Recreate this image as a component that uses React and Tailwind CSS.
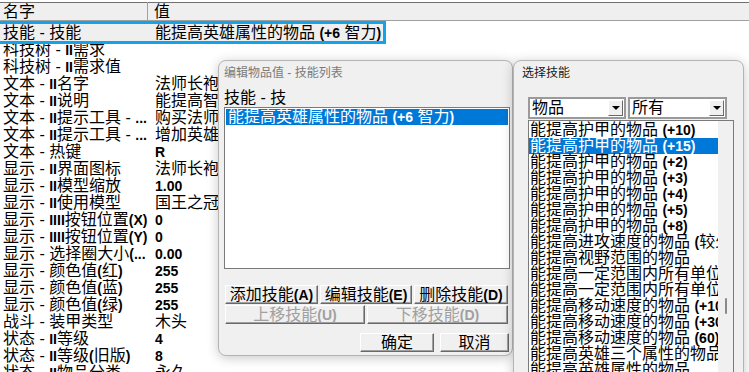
import React from "react";

const FONT = "font-['Liberation_Sans','Noto_Sans_CJK_SC',sans-serif]";

// Latin runs render bold and a bit smaller, like the old bitmap font does
function Mixed({ text }) {
  const parts = text.split(/([A-Za-z0-9()+.]+)/);
  return parts.map((p, i) =>
    /[A-Za-z0-9()+.]/.test(p) ? (
      <b key={i} className="text-[14px] font-bold">{p}</b>
    ) : (
      <span key={i}>{p}</span>
    )
  );
}

const rows = [
  ["科技树 - II需求", ""],
  ["科技树 - II需求值", ""],
  ["文本 - II名字", "法师长袍"],
  ["文本 - II说明", "能提高智力的物品"],
  ["文本 - II提示工具 - ...", "购买法师长袍"],
  ["文本 - II提示工具 - ...", "增加英雄的智力"],
  ["文本 - 热键", "R"],
  ["显示 - II界面图标", "法师长袍"],
  ["显示 - II模型缩放", "1.00"],
  ["显示 - II使用模型", "国王之冠"],
  ["显示 - IIII按钮位置(X)", "0"],
  ["显示 - IIII按钮位置(Y)", "0"],
  ["显示 - 选择圈大小(...", "0.00"],
  ["显示 - 颜色值(红)", "255"],
  ["显示 - 颜色值(蓝)", "255"],
  ["显示 - 颜色值(绿)", "255"],
  ["战斗 - 装甲类型", "木头"],
  ["状态 - II等级", "4"],
  ["状态 - II等级(旧版)", "8"],
  ["状态 - II物品分类", "永久"],
];

const skills = [
  "能提高护甲的物品 (+10)",
  "能提高护甲的物品 (+15)",
  "能提高护甲的物品 (+2)",
  "能提高护甲的物品 (+3)",
  "能提高护甲的物品 (+4)",
  "能提高护甲的物品 (+5)",
  "能提高护甲的物品 (+8)",
  "能提高进攻速度的物品 (较少)",
  "能提高视野范围的物品",
  "能提高一定范围内所有单位的护甲",
  "能提高一定范围内所有单位的攻击",
  "能提高移动速度的物品 (+10)",
  "能提高移动速度的物品 (+30)",
  "能提高移动速度的物品 (60)",
  "能提高英雄三个属性的物品",
  "能提高英雄属性的物品",
];

function Btn({ children, w, disabled }) {
  return (
    <button
      className={`${w} h-[19px] flex items-center justify-center bg-[#f0f0f0] border border-t-white border-l-white border-b-[#696969] border-r-[#696969] shadow-[inset_-1px_-1px_0_#a0a0a0] text-[16px] leading-[16px] ${
        disabled ? "text-[#a0a0a0]" : "text-black"
      }`}
    >
      <Mixed text={children} />
    </button>
  );
}

function Combo({ w, label }) {
  return (
    <div className={`${w} h-[22px] flex items-center bg-white border-2 border-[#9a9a9a] pl-[2px]`}>
      <span className="flex-1 text-[16px] leading-[16px]">{label}</span>
      <span className="w-[15px] h-[16px] mr-[1px] flex items-center justify-center bg-[#f0f0f0] border border-t-white border-l-white border-b-[#696969] border-r-[#696969]">
        <span className="w-0 h-0 border-l-[4px] border-r-[4px] border-t-[4px] border-l-transparent border-r-transparent border-t-black" />
      </span>
    </div>
  );
}

export default function App() {
  return (
    <div className={`relative w-[749px] h-[372px] overflow-hidden bg-white text-black ${FONT}`}>
      {/* property grid */}
      <div className="flex flex-col">
        <div className="h-[21px] flex bg-[#efefef] border-t-2 border-t-white shadow-[inset_0_1px_0_#707070] border-b border-b-[#a0a0a0] text-[16px] leading-[17px]">
          <div className="w-[148px] pl-[3px] pt-[1px] border-r border-[#a0a0a0]">名字</div>
          <div className="pl-[6px] pt-[1px]">值</div>
        </div>
        <div className="mt-[3px] h-[17px] w-[383px] relative z-10 flex bg-[#efefef] outline-3 outline-[#12a3ea] text-[16px] leading-[17px] whitespace-nowrap">
          <div className="w-[155px] pl-[3px]">技能 - 技能</div>
          <div>
            <Mixed text="能提高英雄属性的物品 (+6 智力)" />
          </div>
        </div>
        {rows.map(([k, v], i) => (
          <div key={i} className="h-[17px] flex text-[16px] leading-[17px] whitespace-nowrap">
            <div className="w-[155px] pl-[3px] overflow-hidden">
              <Mixed text={k} />
            </div>
            <div>
              <Mixed text={v} />
            </div>
          </div>
        ))}
      </div>

      {/* 编辑物品值 dialog */}
      <div className="absolute left-[218px] top-[60px] w-[295px] h-[296px] flex flex-col bg-[#f0f0f0] border border-[#b4b4b4] rounded-[8px] shadow-[0_2px_12px_rgba(0,0,0,0.22)] pl-[5px]">
        <div className="mt-[4px] h-[16px] text-[12px] leading-[16px] text-[#7a7a7a]">编辑物品值 - 技能列表</div>
        <div className="mt-[8px] h-[17px] text-[16px] leading-[17px]">技能 - 技</div>
        <div className="mt-[1px] w-[286px] h-[162px] bg-white border border-[#7a7a7a] p-[1px]">
          <div className="h-[16px] bg-[#0078d7] text-white text-[16px] leading-[16px] pl-[2px] whitespace-nowrap">
            <Mixed text="能提高英雄属性的物品 (+6 智力)" />
          </div>
        </div>
        <div className="mt-[16px] ml-[1px] flex gap-[2px]">
          <Btn w="w-[93px]">添加技能(A)</Btn>
          <Btn w="w-[92px]">编辑技能(E)</Btn>
          <Btn w="w-[94px]">删除技能(D)</Btn>
        </div>
        <div className="mt-[1px] ml-[1px] flex gap-[2px]">
          <Btn w="w-[140px]" disabled>上移技能(U)</Btn>
          <Btn w="w-[141px]" disabled>下移技能(D)</Btn>
        </div>
        <div className="mt-[9px] w-[285px] flex justify-end gap-[6px]">
          <Btn w="w-[74px]">确定</Btn>
          <Btn w="w-[69px]">取消</Btn>
        </div>
      </div>

      {/* 选择技能 dialog */}
      <div className="absolute left-[513px] top-[60px] w-[231px] h-[380px] flex flex-col bg-[#f0f0f0] border border-[#b4b4b4] rounded-[8px] shadow-[0_2px_12px_rgba(0,0,0,0.22)]">
        <div className="mt-[4px] h-[16px] pl-[8px] text-[12px] leading-[16px] text-[#1a1a1a]">选择技能</div>
        <div className="mt-[16px] ml-[14px] flex gap-[2px]">
          <Combo w="w-[98px]" label="物品" />
          <Combo w="w-[99px]" label="所有" />
        </div>
        <div className="mt-[1px] ml-[14px] w-[206px] h-[300px] flex bg-white border border-[#7a7a7a]">
          <div className="w-[189px] pt-[1px] flex flex-col text-[16px] leading-[16px] whitespace-nowrap overflow-hidden">
            {skills.map((s, i) => (
              <div key={i} className={`h-[16px] shrink-0 pl-[1px] ${i === 1 ? "bg-[#0078d7] text-white" : ""}`}>
                <Mixed text={s} />
              </div>
            ))}
          </div>
          <div className="flex-1 bg-[#f0f0f0] flex justify-center pt-[177px]">
            <div className="w-[2px] h-[16px] bg-[#8a8a8a] rounded-full" />
          </div>
        </div>
      </div>
    </div>
  );
}
